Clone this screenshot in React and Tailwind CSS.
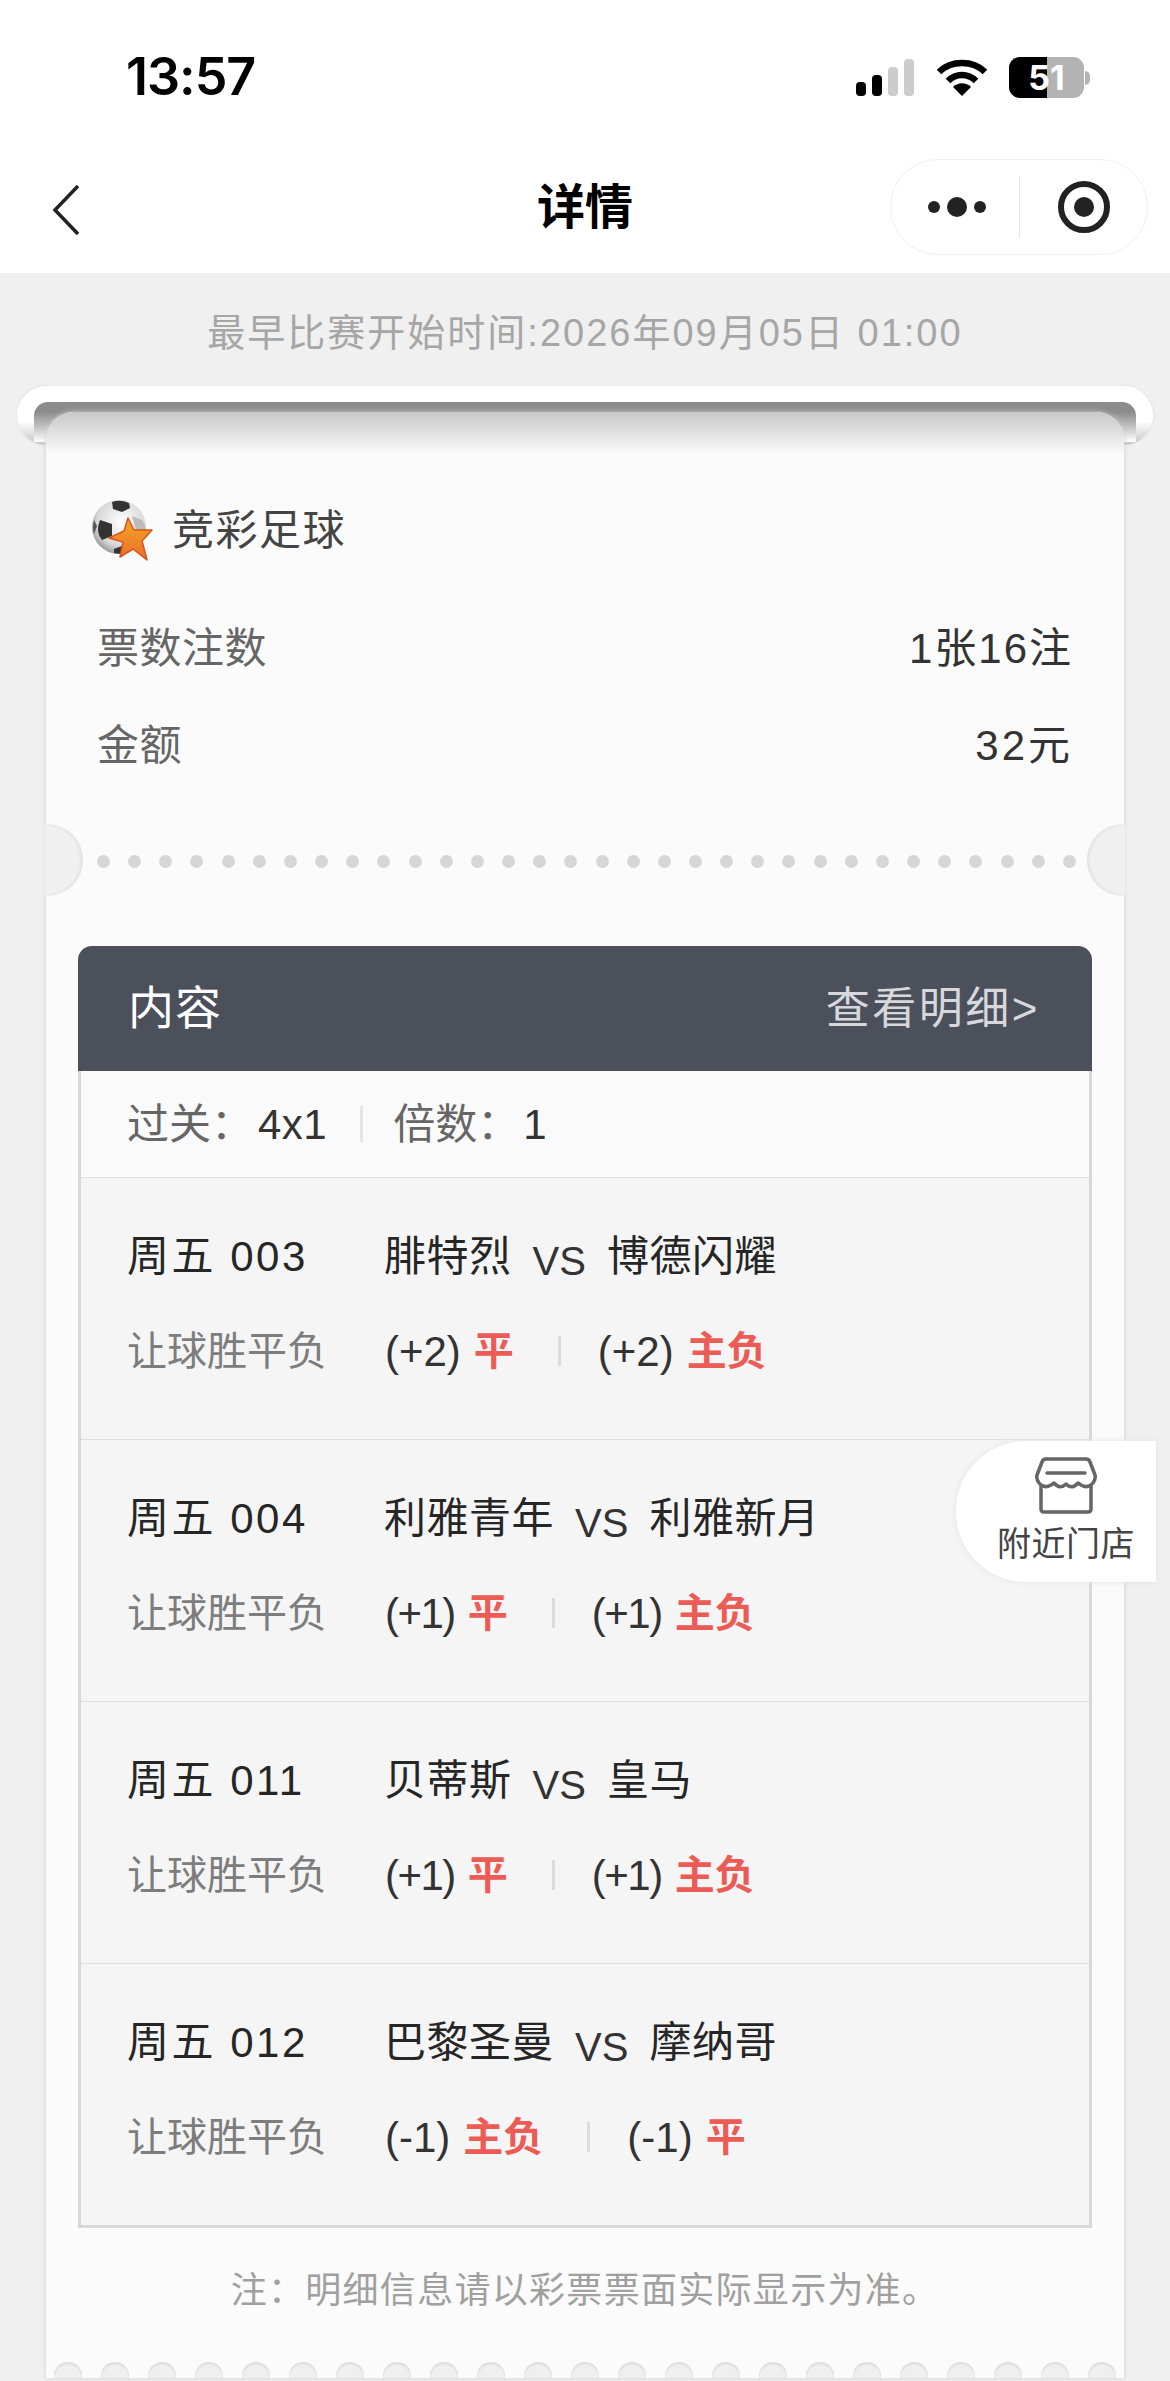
const rows = [
  { day: "周五 003", home: "腓特烈", away: "博德闪耀", a: ["(+2)", "平"], b: ["(+2)", "主负"] },
  { day: "周五 004", home: "利雅青年", away: "利雅新月", a: ["(+1)", "平"], b: ["(+1)", "主负"], narrow: true },
  { day: "周五 011", home: "贝蒂斯", away: "皇马", a: ["(+1)", "平"], b: ["(+1)", "主负"], narrow: true },
  { day: "周五 012", home: "巴黎圣曼", away: "摩纳哥", a: ["(-1)", "主负"], b: ["(-1)", "平"] },
];

function StatusIcons() {
  return (
    <div className="flex items-center">
      <svg width="58" height="37" viewBox="0 0 58 37">
        <rect x="0" y="23" width="10" height="14" rx="4" fill="#000" />
        <rect x="16" y="16" width="10" height="21" rx="4" fill="#000" />
        <rect x="32" y="8" width="10" height="29" rx="4" fill="#ccc" />
        <rect x="48" y="0" width="10" height="37" rx="4" fill="#ccc" />
      </svg>
      <svg width="50" height="38" viewBox="0 0 50 38" className="ml-[23px]">
        <path d="M2 13 C14 1 36 1 48 13" fill="none" stroke="#000" strokeWidth="6.5" />
        <path d="M11 22 C19 14 31 14 39 22" fill="none" stroke="#000" strokeWidth="6.5" />
        <path d="M16 28 C21 23 29 23 34 28 L25 37 Z" fill="#000" />
      </svg>
      <div className="relative ml-[22px] flex h-[41px] w-[75px] overflow-hidden rounded-[11px] bg-[#b3b3b3]">
        <div className="h-full w-[38px] bg-black" />
        <span className="absolute inset-0 flex items-center justify-center font-['Inter',sans-serif] text-[34px] font-bold text-white">51</span>
      </div>
      <span className="ml-[1px] h-[14px] w-[5px] rounded-r-full bg-[#b3b3b3]" />
    </div>
  );
}

function StoreIcon() {
  return (
    <svg width="62" height="58" viewBox="0 0 62 58" fill="none" stroke="#666" strokeWidth="3.5" strokeLinejoin="round" strokeLinecap="round">
      <path d="M11 2 H51 Q54 2 55 5 L60 18 Q61 22 58 26 Q53 32 46 28 L43 26 Q37 33 31 27 Q25 33 19 26 L16 28 Q9 32 4 26 Q1 22 2 18 L7 5 Q8 2 11 2 Z" />
      <path d="M12 16 H50" />
      <path d="M6 29 V52 Q6 55 9 55 H53 Q56 55 56 52 V29" />
    </svg>
  );
}

function BallIcon() {
  return (
    <svg width="62" height="62" viewBox="0 0 62 62">
      <defs>
        <radialGradient id="ball" cx="55%" cy="40%" r="65%">
          <stop offset="0%" stopColor="#ffffff" />
          <stop offset="70%" stopColor="#d8d8d8" />
          <stop offset="100%" stopColor="#8a8a8a" />
        </radialGradient>
        <linearGradient id="star" x1="0" y1="0" x2="0" y2="1">
          <stop offset="0%" stopColor="#f5a623" />
          <stop offset="100%" stopColor="#e8702a" />
        </linearGradient>
      </defs>
      <circle cx="27" cy="27" r="27" fill="url(#ball)" />
      <path d="M20 2 Q28 -1 37 3 L38 8 L30 12 L21 9 Z" fill="#333" />
      <path d="M8 20 L20 24 L20 36 L10 40 Q3 32 8 20 Z" fill="#333" />
      <path d="M2 34 Q0 28 2 20 L5 26 Z" fill="#555" />
      <path d="M40 16 L50 20 Q54 26 54 32 L44 30 Z" fill="#bbb" />
      <path d="M22 49 L30 46 L34 52 Q28 55 22 53 Z" fill="#333" />
      <path d="M36 18 L42 30 L60 30 L50 41 L55 60 L41 49 L28 57 L31 42 L17 38 L32 31 Z" fill="url(#star)" stroke="#d9541e" strokeWidth="1.5" strokeLinejoin="round" />
    </svg>
  );
}

function Row({ row, last }) {
  return (
    <div className={`pl-[46px] pt-[53px] ${last ? "h-[261px]" : "h-[262px] border-b border-[#dedede]"}`}>
      <div className="flex h-[50px] items-center text-[42px] text-[#262626]">
        <span className="w-[257px] tracking-[2.5px]">{row.day}</span>
        <span className="tracking-[0.5px]">{row.home}</span>
        <span className="mx-[21px] mt-[9px] text-[40px] text-[#333]">VS</span>
        <span className="tracking-[0.5px]">{row.away}</span>
      </div>
      <div className="mt-[47px] flex h-[46px] items-center">
        <span className="w-[258px] text-[40px] text-[#7d7d7d]">让球胜平负</span>
        <span className={`text-[42px] text-[#333] ${row.narrow ? "tracking-[-1.5px]" : ""}`}>{row.a[0]}</span>
        <span className="ml-[13px] text-[40px] font-bold text-[#ec5c56]">{row.a[1]}</span>
        <span className="ml-[44px] mr-[37px] h-[30px] w-[3px] bg-[#dcdcdc]" />
        <span className={`text-[42px] text-[#333] ${row.narrow ? "tracking-[-1.5px]" : ""}`}>{row.b[0]}</span>
        <span className="ml-[13px] text-[40px] font-bold text-[#ec5c56]">{row.b[1]}</span>
      </div>
    </div>
  );
}

export default function App() {
  return (
    <div className="relative h-[2381px] w-[1170px] overflow-hidden bg-[#f0f0f0] font-['Liberation_Sans','Noto_Sans_CJK_SC',sans-serif]">
      {/* 状态栏 + 导航 */}
      <div className="h-[273px] bg-white">
        <div className="flex items-start justify-between pl-[126px] pr-[80px] pt-[48px]">
          <span className="font-['Inter',sans-serif] text-[52px] leading-[58px] font-semibold tracking-[-1px] text-black">13:57</span>
          <div className="pt-[9px]"><StatusIcons /></div>
        </div>
        <div className="relative mt-[54px] flex h-[96px] items-center justify-center">
          <svg width="32" height="52" viewBox="0 0 32 52" className="absolute left-[50px] top-[24px]" fill="none" stroke="#222" strokeWidth="3.5">
            <path d="M28 2 L5 26 L28 50" />
          </svg>
          <span className="text-[48px] font-bold text-black">详情</span>
          <div className="absolute left-[890px] top-[-1px] flex h-[96px] w-[258px] items-center rounded-[48px] border border-[#f0f0f0] bg-white">
            <div className="flex w-[128px] items-center justify-center gap-[7px] pl-[4px]">
              <span className="h-[12px] w-[12px] rounded-full bg-[#222]" />
              <span className="h-[20px] w-[20px] rounded-full bg-[#222]" />
              <span className="h-[12px] w-[12px] rounded-full bg-[#222]" />
            </div>
            <div className="h-[62px] w-px bg-[#e6e6e6]" />
            <div className="flex flex-1 items-center justify-center">
              <div className="flex h-[52px] w-[52px] items-center justify-center rounded-full border-[6px] border-[#222]">
                <span className="h-[20px] w-[20px] rounded-full bg-[#222]" />
              </div>
            </div>
          </div>
        </div>
      </div>

      <p className="mt-[39px] text-center text-[38px] leading-[42px] tracking-[2px] text-[#a6a6a6]">最早比赛开始时间:2026年09月05日 01:00</p>

      {/* 卷轴 */}
      <div className="mx-[17px] mt-[32px] h-[59px] rounded-[30px] bg-gradient-to-b from-white from-60% to-[#c4c4c4] pt-[16px] shadow-[0_0_3px_#ddd]">
        <div className="mx-[17px] h-[40px] rounded-t-[14px] bg-gradient-to-b from-[#8c8c8c] from-25% to-white" />
      </div>

      {/* 票 */}
      <div className="relative mx-[46px] -mt-[33px] h-[1966px] rounded-t-[28px] bg-[#fbfbfb] shadow-[0_0_5px_#d0d0d0]">
        <div className="absolute left-0 right-0 top-0 h-[42px] rounded-t-[28px] bg-gradient-to-b from-[#c8c8c8] to-[#fbfbfb]" />

        <div className="relative flex items-center pl-[46px] pt-[87px]">
          <BallIcon />
          <span className="ml-[18px] text-[42px] tracking-[1.5px] text-[#444]">竞彩足球</span>
        </div>

        <div className="relative mt-[57px] flex items-center justify-between pl-[51px] pr-[51px] text-[42px] leading-[60px]">
          <span className="tracking-[0.5px] text-[#666]">票数注数</span>
          <span className="tracking-[2px] text-[#333]">1张16注</span>
        </div>
        <div className="relative mt-[37px] flex items-center justify-between pl-[51px] pr-[51px] text-[42px] leading-[60px]">
          <span className="tracking-[0.5px] text-[#666]">金额</span>
          <span className="tracking-[3px] text-[#333]">32元</span>
        </div>

        {/* 打孔线 */}
        <div className="relative mt-[70px] flex h-[30px] items-center justify-between pl-[51px] pr-[48px]">
          {Array.from({ length: 32 }).map((_, i) => (
            <span key={i} className="h-[13px] w-[13px] rounded-full bg-[#d6d6d6]" />
          ))}
          <span className="absolute -left-[1px] top-[-22px] h-[72px] w-[38px] rounded-r-[36px] bg-[#f0f0f0] shadow-[inset_-2px_0_3px_#e0e0e0]" />
          <span className="absolute -right-[1px] top-[-22px] h-[72px] w-[38px] rounded-l-[36px] bg-[#f0f0f0] shadow-[inset_2px_0_3px_#e0e0e0]" />
        </div>

        {/* 内容表 */}
        <div className="mx-[32px] mt-[70px]">
          <div className="flex h-[125px] items-center justify-between rounded-t-[14px] bg-[#4b505b] pl-[50px] pr-[52px]">
            <span className="text-[46px] tracking-[1px] text-white">内容</span>
            <span className="text-[44px] tracking-[2.5px] text-[#d6d8de]">查看明细&gt;</span>
          </div>
          <div className="border-x-[3px] border-b-[3px] border-[#d8d8d8] bg-[#f5f5f5]">
            <div className="flex h-[107px] items-center border-b border-[#dedede] bg-[#fafafa] pl-[46px] text-[42px]">
              <span className="text-[#666]">过关：</span>
              <span className="ml-[5px] tracking-[0.5px] text-[#333]">4x1</span>
              <span className="ml-[33px] mr-[30px] h-[36px] w-[3px] bg-[#e4e4e4]" />
              <span className="text-[#666]">倍数：</span>
              <span className="ml-[4px] text-[#333]">1</span>
            </div>
            {rows.map((row, i) => <Row key={row.day} row={row} last={i === rows.length - 1} />)}
          </div>
          <p className="mt-[42px] text-center text-[36px] leading-[42px] tracking-[1.3px] text-[#a0a0a0]">注：明细信息请以彩票票面实际显示为准。</p>
        </div>
      </div>

      {/* 锯齿 */}
      <div className="absolute bottom-[3px] left-[54px] right-[54px] flex h-[16px] justify-between overflow-hidden">
        {Array.from({ length: 23 }).map((_, i) => (
          <span key={i} className="h-[40px] w-[28px] rounded-t-[14px] bg-[#efefef] shadow-[inset_0_2px_2px_#dcdcdc]" />
        ))}
      </div>

      {/* 附近门店 */}
      <div className="absolute left-[956px] top-[1441px] flex h-[141px] w-[200px] flex-col items-center rounded-l-[70px] bg-white pl-[20px] pt-[16px] shadow-[0_0_6px_#e2e2e2]">
        <StoreIcon />
        <span className="mt-[9px] text-[34px] leading-[40px] tracking-[0.5px] text-[#444]">附近门店</span>
      </div>
    </div>
  );
}
